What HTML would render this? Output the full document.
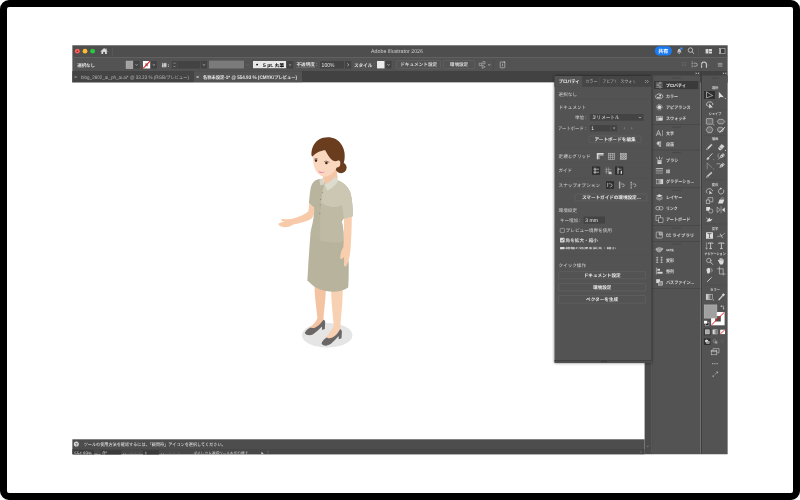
<!DOCTYPE html>
<html lang="ja">
<head>
<meta charset="utf-8">
<title>Adobe Illustrator 2026</title>
<style>
html,body{margin:0;padding:0}
body{width:800px;height:500px;background:#fff;position:relative;overflow:hidden;font-family:"Liberation Sans",sans-serif}
.frame{position:absolute;left:0;top:0;width:800px;height:500px;box-sizing:border-box;border:7px solid #000;border-radius:9px;pointer-events:none}
.win{position:absolute;left:0;top:0;width:800px;height:500px;clip-path:inset(45.2px 72.2px 45.5px 72.2px)}
.layer{position:absolute;left:0;top:0;width:800px;height:500px;overflow:hidden}
.jt{overflow:visible;font-family:"Liberation Sans","Noto Sans CJK JP",sans-serif;text-rendering:geometricPrecision;filter:grayscale(1)}

</style>
</head>
<body>
<div class="frame"></div>
<main class="win">
<header class="titlebar"><svg class="layer" width="800" height="500" viewBox="0 0 800 500"><rect class="titlebar" x="72.2" y="45.2" width="655.6" height="12.3" fill="#4e4e4e"/><rect x="72.2" y="57.1" width="655.6" height="0.6" fill="#464646"/><rect x="72.2" y="45.2" width="655.6" height="0.5" fill="#606060"/><g class="ic "><circle cx="77.35" cy="51.2" r="2.4" fill="#fe5f57"/><circle cx="85" cy="51.2" r="2.4" fill="#febc2e"/><circle cx="92.65" cy="51.2" r="2.4" fill="#28c840"/><circle cx="77.35" cy="51.2" r="0.75" fill="#8c1810"/><path d="M100.4 51.4L104.1 48L105.6 49.4V48.6H106.6V50.3L107.8 51.4H106.8V54H105V52H103.2V54H101.4V51.4Z" fill="#d8d8d8"/><rect x="112.1" y="47" width="0.5" height="9" fill="#5f5f5f"/><rect x="654.8" y="46.25" width="17.1" height="9.3" rx="4.65" fill="#1a7af0"/><path d="M676.9 52.6C677.8 51.8 677.6 50 678.2 49.2C678.7 48.5 679.9 48.5 680.4 49.2C681 50 680.8 51.8 681.7 52.6Z M678.6 53.1h1.4v0.6h-1.4z" fill="#c0c0c0"/><circle cx="681.4" cy="48.5" r="1.25" fill="#2d8cf0"/><circle cx="690.4" cy="50.1" r="2.25" fill="none" stroke="#d4d4d4" stroke-width="0.75"/><path d="M692.1 51.8L694.1 53.7" stroke="#d4d4d4" stroke-width="0.9"/><rect x="698.3" y="47" width="0.5" height="9" fill="#5f5f5f"/><path d="M705.6 49h2.9v4.4h-2.9z M709 49h3v1.9h-3z M709 51.4h3v2h-3z" fill="#d4d4d4"/><rect x="719.3" y="48.4" width="5.7" height="5.3" fill="#3c3c3c" stroke="#c4c4c4" stroke-width="0.6"/><rect x="719.6" y="48.7" width="1.4" height="4.7" fill="#b0b0b0"/></g><svg class="jt apptitle" role="img" aria-label="Adobe Illustrator 2026" x="371" y="48.65" width="52" height="5.5" fill="#cdcdcd" viewBox="0 -88 978.42 100" preserveAspectRatio="none"><text x="0" y="0" font-size="100">Adobe&#160;Illustrator&#160;2026</text></svg><svg class="jt " role="img" aria-label="共有" x="658.2" y="48.35" width="10.2" height="5.1" fill="#ffffff" viewBox="0 -88 200 100" preserveAspectRatio="none"><title>共有</title><text x="0" y="0" font-size="100" font-weight="bold">共有</text></svg></svg></header>
<nav class="controlbar"><svg class="layer" width="800" height="500" viewBox="0 0 800 500"><rect class="controlbar" x="72.2" y="57.6" width="655.6" height="13.4" fill="#535353"/><rect x="74.6" y="59.6" width="0.5" height="9.8" fill="#646464"/><svg class="jt " role="img" aria-label="選択なし" x="77.2" y="62.5" width="17.8" height="4.6" fill="#e0e0e0" viewBox="0 -88 400 100" preserveAspectRatio="none"><title>選択なし</title><text x="0" y="0" font-size="100" font-weight="bold">選択なし</text></svg><g class="ic "><rect x="126.1" y="61.1" width="6.7" height="7.4" fill="#a2a2a2" stroke="#c0c0c0" stroke-width="0.55"/><rect x="133.6" y="61" width="6" height="7.5" fill="#434343"/><path d="M135.4 64.35L136.6 65.35L137.8 64.35" fill="none" stroke="#d0d0d0" stroke-width="0.65"/><rect x="143" y="61" width="7.2" height="7.5" fill="#fff"/><rect x="145.3" y="63.3" width="2.6" height="2.9" fill="#8a8a8a"/><path d="M143.2 68.3L150 61.2" stroke="#f01c1c" stroke-width="1.05"/><rect x="150.8" y="61" width="6" height="7.5" fill="#434343"/><path d="M152.6 64.35L153.8 65.35L155 64.35" fill="none" stroke="#d0d0d0" stroke-width="0.65"/><rect x="171.8" y="61" width="5.4" height="7.5" fill="#434343"/><path d="M173.5 63.7L174.5 62.7L175.5 63.7" fill="none" stroke="#cfcfcf" stroke-width="0.55"/><path d="M173.5 65.9L174.5 66.9L175.5 65.9" fill="none" stroke="#cfcfcf" stroke-width="0.55"/><rect x="177.8" y="61" width="22.4" height="7.5" fill="#434343"/><rect x="200.9" y="61" width="6.1" height="7.5" fill="#434343"/><path d="M202.75 64.35L203.95 65.35L205.15 64.35" fill="none" stroke="#d0d0d0" stroke-width="0.65"/><rect x="209" y="60.6" width="35" height="7.9" fill="#7b7b7b"/><path d="M246.3 64.3L247.5 65.3L248.7 64.3" fill="none" stroke="#6e6e6e" stroke-width="0.65"/><rect x="253" y="61" width="33" height="7.2" fill="#e9e9e9"/><circle cx="257.1" cy="64.6" r="0.95" fill="#111"/><rect x="287" y="61" width="6.2" height="7.5" fill="#434343"/><path d="M288.9 64.35L290.1 65.35L291.3 64.35" fill="none" stroke="#d0d0d0" stroke-width="0.65"/><path d="M296.5 67.6H315" stroke="#bdbdbd" stroke-width="0.4" stroke-dasharray="0.6 0.5"/><rect x="320" y="61" width="24" height="7.5" fill="#434343"/><rect x="344.9" y="61" width="6.3" height="7.5" fill="#434343"/><path d="M347.3 63.4L349 64.75L347.3 66.1" fill="none" stroke="#d0d0d0" stroke-width="0.6"/><rect x="377" y="61" width="7.5" height="7.4" fill="#ebebeb"/><rect x="385.4" y="61" width="6.2" height="7.5" fill="#434343"/><path d="M387.3 64.35L388.5 65.35L389.7 64.35" fill="none" stroke="#d0d0d0" stroke-width="0.65"/><path d="M479.2 63.2h2.4v2.4h-2.4z M482.8 61.6h2.2v2.2h-2.2z M482.2 65.2L485.2 66.9L482.2 68.4Z" fill="none" stroke="#cfcfcf" stroke-width="0.5"/><path d="M488.1 64.3L489.3 65.3L490.5 64.3" fill="none" stroke="#d8d8d8" stroke-width="0.65"/><rect x="493.4" y="59.5" width="0.5" height="10" fill="#494949"/><rect x="500.2" y="62" width="4.6" height="5.8" rx="0.6" fill="none" stroke="#d0d0d0" stroke-width="0.6"/><path d="M502.5 63.6V66.2" stroke="#d0d0d0" stroke-width="0.6"/><path d="M504.4 61.2V63 M503.5 62.1H505.3" stroke="#d0d0d0" stroke-width="0.45"/><rect x="682" y="62.2" width="0.8" height="0.8" fill="#6f6f6f"/><rect x="682" y="63.7" width="0.8" height="0.8" fill="#6f6f6f"/><rect x="682" y="65.2" width="0.8" height="0.8" fill="#6f6f6f"/><rect x="683.5" y="62.2" width="0.8" height="0.8" fill="#6f6f6f"/><rect x="683.5" y="63.7" width="0.8" height="0.8" fill="#6f6f6f"/><rect x="683.5" y="65.2" width="0.8" height="0.8" fill="#6f6f6f"/><rect x="685" y="62.2" width="0.8" height="0.8" fill="#6f6f6f"/><rect x="685" y="63.7" width="0.8" height="0.8" fill="#6f6f6f"/><rect x="685" y="65.2" width="0.8" height="0.8" fill="#6f6f6f"/><path d="M692.2 61.4V68" stroke="#d4d4d4" stroke-width="0.7" stroke-dasharray="1 0.6"/><path d="M693.6 63.2h2.2a1.5 1.5 0 0 1 0 3h-2.2" fill="none" stroke="#d4d4d4" stroke-width="0.6"/><path d="M701.6 67.8V64.3a2.4 2.4 0 0 1 4.8 0V67.8" fill="none" stroke="#d4d4d4" stroke-width="1.05" stroke-dasharray="2.6 0.5 20"/><path d="M707.6 65.8L708.8 64.8" stroke="#a0a0a0" stroke-width="0.4"/><path d="M717.8 63.4h4.6M717.8 64.8h4.6M717.8 66.2h4.6" stroke="#b8b8b8" stroke-width="0.7"/></g><svg class="jt " role="img" aria-label="線" x="161.8" y="62.3" width="5" height="5" fill="#e0e0e0" viewBox="0 -88 100 100" preserveAspectRatio="none"><title>線</title><text x="0" y="0" font-size="100" font-weight="bold">線</text></svg><svg class="jt " role="img" aria-label=":" x="167.6" y="62.2" width="1.67" height="5" fill="#e0e0e0" viewBox="0 -88 33.3 100" preserveAspectRatio="none"><text x="0" y="0" font-size="100" font-weight="bold">:</text></svg><svg class="jt " role="img" aria-label="5 pt. 丸筆" x="263" y="62.3" width="21.2" height="4.8" fill="#111111" viewBox="0 -88 452.02 100" preserveAspectRatio="none"><title>5 pt. 丸筆</title><text x="0" y="0" font-size="108" font-weight="bold">5&#160;pt.&#160;</text><text x="252.02" y="0" font-size="100" font-weight="bold">丸筆</text></svg><svg class="jt " role="img" aria-label="不透明度" x="296.5" y="62.3" width="18.5" height="4.6" fill="#e0e0e0" viewBox="0 -88 400 100" preserveAspectRatio="none"><title>不透明度</title><text x="0" y="0" font-size="100" font-weight="bold">不透明度</text></svg><svg class="jt " role="img" aria-label=":" x="316" y="62.4" width="1.28" height="4.6" fill="#d6d6d6" viewBox="0 -88 27.78 100" preserveAspectRatio="none"><text x="0" y="0" font-size="100">:</text></svg><svg class="jt " role="img" aria-label="100%" x="321.6" y="62.15" width="12.8" height="5.7" fill="#e6e6e6" viewBox="0 -88 255.76 100" preserveAspectRatio="none"><text x="0" y="0" font-size="100">100%</text></svg><svg class="jt " role="img" aria-label="スタイル" x="354" y="62.5" width="18.2" height="4.6" fill="#e0e0e0" viewBox="0 -88 400 100" preserveAspectRatio="none"><title>スタイル</title><text x="0" y="0" font-size="100" font-weight="bold">スタイル</text></svg><svg class="jt " role="img" aria-label=":" x="373.6" y="62.4" width="1.28" height="4.6" fill="#9c9c9c" viewBox="0 -88 27.78 100" preserveAspectRatio="none"><text x="0" y="0" font-size="100">:</text></svg><rect class="btn" x="396.5" y="60.6" width="44" height="8" rx="0.9" fill="none" stroke="#686868" stroke-width="0.5"/><svg class="jt " role="img" aria-label="ドキュメント設定" x="400.2" y="62.4" width="37" height="4.6" fill="#d6d6d6" viewBox="0 -88 800 100" preserveAspectRatio="none"><title>ドキュメント設定</title><text x="0" y="0" font-size="100" font-weight="bold">ドキュメント設定</text></svg><rect class="btn" x="443.5" y="60.6" width="31" height="8" rx="0.9" fill="none" stroke="#686868" stroke-width="0.5"/><svg class="jt " role="img" aria-label="環境設定" x="449.8" y="62.4" width="18.4" height="4.6" fill="#d6d6d6" viewBox="0 -88 400 100" preserveAspectRatio="none"><title>環境設定</title><text x="0" y="0" font-size="100" font-weight="bold">環境設定</text></svg></svg></nav>
<div class="tabs"><svg class="layer" width="800" height="500" viewBox="0 0 800 500"><rect class="tabbar" x="72.2" y="71" width="655.6" height="11.6" fill="#424242"/><rect class="tab" x="72.2" y="71.2" width="121.3" height="11.4" fill="#444444"/><rect class="tab active" x="194" y="71.2" width="108" height="11.4" fill="#535353"/><g class="ic "><path d="M74.9 76.3L76.3 77.7M76.3 76.3L74.9 77.7" stroke="#9c9c9c" stroke-width="0.75" stroke-linecap="square"/><path d="M196.9 76.3L198.3 77.7M198.3 76.3L196.9 77.7" stroke="#dcdcdc" stroke-width="0.75" stroke-linecap="square"/><path d="M695.6999999999999 72.2L697.1999999999999 73.3L695.6999999999999 74.4ZM699.1 72.2L697.6 73.3L699.1 74.4Z" fill="#b8b8b8"/><path d="M722.9 72.2L724.4 73.3L722.9 74.4ZM726.3000000000001 72.2L724.8000000000001 73.3L726.3000000000001 74.4Z" fill="#b8b8b8"/></g><svg class="jt tab1" role="img" aria-label="blog_2602_ai_ph_ai.ai* @ 33.33 % (RGB/プレビュー)" x="81" y="74.7" width="108" height="4.6" fill="#b4b4b4" viewBox="0 -88 2560.96 100" preserveAspectRatio="none"><title>blog_2602_ai_ph_ai.ai* @ 33.33 % (RGB/プレビュー)</title><text x="0" y="0" font-size="108">blog_2602_ai_ph_ai.ai*&#160;@&#160;33.33&#160;%&#160;(RGB/</text><text x="2025" y="0" font-size="100">プレビュー</text><text x="2525" y="0" font-size="108">)</text></svg><svg class="jt tab2" role="img" aria-label="名称未設定-1* @ 554.93 % (CMYK/プレビュー)" x="203" y="74.7" width="94" height="4.6" fill="#e6e6e6" viewBox="0 -88 2209.67 100" preserveAspectRatio="none"><title>名称未設定-1* @ 554.93 % (CMYK/プレビュー)</title><text x="0" y="0" font-size="100" font-weight="bold">名称未設定</text><text x="500" y="0" font-size="108" font-weight="bold">-1*&#160;@&#160;554.93&#160;%&#160;(CMYK/</text><text x="1673.71" y="0" font-size="100" font-weight="bold">プレビュー</text><text x="2173.71" y="0" font-size="108" font-weight="bold">)</text></svg></svg></div>
<section class="canvaswrap"><svg class="layer" width="800" height="500" viewBox="0 0 800 500"><rect class="canvas" x="72.2" y="82.6" width="572.4" height="356.7" fill="#ffffff"/><rect class="vscroll" x="644.6" y="82.6" width="6.8" height="371.9" fill="#4b4b4b"/><svg class="person" role="img" aria-label="isometric woman illustration" x="270" y="130" width="100" height="225" viewBox="270 130 100 225"><title>isometric woman illustration</title>
<!-- ground shadow -->
<ellipse cx="327.2" cy="335.2" rx="25.2" ry="12.3" fill="#e5e5e5"/>
<!-- legs -->
<path d="M314.6 284C314.4 296 316.4 308 317.4 317.4C317 321 313 324.6 309 328.4L313.4 331.8C317.6 328.4 322.4 324.6 323.4 320.6C323.8 311 326 298 325.8 286Z" fill="#f4c3a2"/>
<path d="M331.2 288C331 300 333 316 333.8 325.6C333 329.4 328.6 334 325 338.6L329.6 341.6C334 337 339.2 332.4 340.4 328.6C340.6 318 343 302 342.6 288Z" fill="#f8d0b2"/>
<!-- shoes -->
<path d="M304.8 333C305.4 330.6 308 328.6 310.6 327.4C312.4 329 316 327.8 319 325C321.2 323 322.6 321 323.4 319.8C324.6 320 325.3 321.2 325.2 322.6L324.8 329L322 330L322 326.6C319.6 329 315.6 333 312.8 334.4C310 335.8 306 335.4 304.8 333Z" fill="#6b6766"/>
<path d="M321.6 343.6C322 341 324.6 338.6 327 337.4C329 339.2 332.6 338 335.6 335.2C337.8 333.2 339.2 330.8 340 329.2C341.4 329.4 342 330.8 341.9 332.2L341.5 338.2L338.7 339.2L338.7 336C336.2 338.6 332.4 343 329.6 344.6C326.8 346.2 322.6 346 321.6 343.6Z" fill="#6b6766"/>
<!-- skirt -->
<path d="M310.6 233C309.4 246 308.2 266 307.4 280.2C312 286 320 290.6 329.4 291.6C337 292.2 344 290.4 348.2 287.4C348.8 278 348.8 268 348.6 262C347.2 255 345.4 247 344 241Z" fill="#b8b39c"/>
<!-- right arm (hanging) -->
<path d="M344.2 215L351.8 215C351.8 228 351.2 240 350.4 250C350 256 348.6 262 346 266.2C344.8 267 343.8 266 344 264.4C344.2 261.4 344.4 258.6 343.6 257C342.8 258.4 341.6 259.2 340.4 258.8C339.8 256 341.2 250.4 343.4 247C344 238 343.8 226 344.2 215Z" fill="#f8ceae"/>
<!-- left arm (extended) -->
<path d="M309.4 203.6C309 207 308.8 210 308.2 211.4C305 214.2 299 216.8 294 218.2C291 219.2 288 219.6 285.6 219.2C283.6 218.8 281.8 218.8 281 219.6C280.8 220.6 281.8 221.2 284.6 221.8C282 222.2 279.6 222.8 278 224C278.6 225.6 281 226.8 284.4 227.3C287.6 227.6 291 226.4 293.2 224.6C298 223.6 305 222 310 219.6C313 218 314.6 214 315 208Z" fill="#f7caa9"/>
<!-- shirt: base (darker side) -->
<path d="M320 179C316.6 179.4 313.4 181 311.8 184.4C310.6 187.4 310.2 191 309.8 194C309.4 198 309 201 309 203.2L314.2 207.6C314.4 212 313.8 218 312.4 224C311.4 228 310.8 231 310.4 233.4C313 236 317 239 320.4 240.6C326 242.4 334 243 338.4 242.6C340.4 242.4 342.4 241.8 343.6 241C343.8 234 343.2 226 341.6 221.6L343.6 218.6L352.7 216.2C352.9 208 352.2 198 350 191.6C348.2 186.8 343.6 182.6 338 180.4L327 184Z" fill="#b9b49e"/>
<!-- shirt: lighter chest / right sleeve -->
<path d="M324.4 184L338 180.2C343.6 182.6 348.2 186.8 350 191.6C352.2 198 352.9 208 352.7 216.2L343.6 218.6C343.4 214 342.4 209 341.4 205.6C338.4 207.4 333.4 207.8 329 206.6C326 205.8 323.4 204.4 321.2 203C321.6 197 322.6 190 324.4 184Z" fill="#cbc7b2"/>
<!-- lower torso tone -->
<path d="M321.2 203C323.4 204.4 326 205.8 329 206.6C333.4 207.8 338.4 207.4 341.4 205.6C342.4 209 343.4 214 343.6 218.6L341.6 221.6C343.2 226 343.8 234 343.6 241C342.4 241.8 340.4 242.4 338.4 242.6C334 243 326 242.4 320.4 240.6C320 230 320 216 321.2 203Z" fill="#bfbaa4"/>
<!-- neck -->
<path d="M322.6 174L336.4 168L337.6 178.6L326 186L323.6 180Z" fill="#f3c5a5"/>
<!-- collar -->
<path d="M319.4 180.4L323.4 177.4C323.4 180 323.8 182.4 324.6 184.2L320.4 185.6Z" fill="#d6d4c4"/>
<path d="M324.6 184.2C328.6 182.6 333 179.6 335.4 176.4L338.4 180.4C336.4 184.4 331.6 188.6 327 190.6Z" fill="#dcdbcd"/>
<!-- buttons -->
<g fill="#8c8774"><circle cx="322.3" cy="192.5" r="0.6"/><circle cx="320.8" cy="199.4" r="0.6"/><circle cx="320.2" cy="205" r="0.6"/><circle cx="319.8" cy="213.4" r="0.65"/></g>
<!-- hair back + bun -->
<circle cx="341" cy="167.6" r="5.6" fill="#6a3d1f"/>
<!-- face -->
<path d="M312.8 155C312.8 160 313.4 165 315 169C316.8 172.6 319.6 175.4 322.8 176.4C325.6 177 329.4 175.8 332.4 173.2C334.6 171.2 336 169 336.8 167.4C339 167.6 340.8 165.6 340.6 163.2C340.4 161 339 160 337.6 160.6L336 150L320 148Z" fill="#fad8bf"/>
<!-- hair front -->
<path d="M311.4 154.4C311.4 148 314 142.6 319 139.4C323.6 136.6 330.6 136.4 335.6 139C340.6 141.8 344 147.4 344.6 153.6C345 158 344.4 162 343 165L339.6 166.4C340.4 165 340.8 163.6 340.4 162.2C340 160.8 338.8 160.2 337.4 160.8C336 161.6 334.2 161.4 332.4 160.2C329.6 158.2 327.4 154.2 325.2 150.2C321.6 150.2 316 152.4 312.6 156.4C311.8 156 311.4 155.4 311.4 154.4Z" fill="#6a3d1f"/>
<!-- eyes -->
<ellipse cx="316" cy="160.6" rx="1.15" ry="1.35" fill="#40241a"/>
<path d="M314.2 159.2C315.2 158.4 316.8 158.4 317.8 159" fill="none" stroke="#40241a" stroke-width="0.5"/>
<ellipse cx="326.4" cy="163" rx="1.3" ry="1.35" fill="#40241a"/>
<path d="M324.2 161.6C325.6 160.8 327.8 161.2 329.4 162.6" fill="none" stroke="#40241a" stroke-width="0.55"/>
<!-- mouth -->
<path d="M318.4 170.4C320.2 171.2 322.6 171.6 324.8 171.4C323.8 172.8 322 173.4 320.6 173C319.4 172.6 318.6 171.6 318.4 170.4Z" fill="#ee7fa8"/>
<path d="M319.2 170.9C320.6 171.4 322.4 171.6 324 171.5L323.4 172.1C322 172.2 320.6 172 319.6 171.5Z" fill="#ffffff"/>
</svg>
</svg></section>
<footer class="status"><svg class="layer" width="800" height="500" viewBox="0 0 800 500"><rect class="statusbar" x="72.2" y="439.3" width="572.4" height="15.2" fill="#4d4d4d"/><rect class="hscroll" x="72.2" y="449.4" width="572.4" height="5.1" fill="#484848"/><rect x="72.2" y="449" width="572.4" height="0.5" fill="#444444"/><g class="ic "><circle cx="76.3" cy="444" r="2.55" fill="#d6d6d6"/><rect x="73.4" y="450.2" width="20.6" height="6" fill="#3b3b3b"/><path d="M94.8 453.5L96 454.5L97.2 453.5" fill="none" stroke="#bdbdbd" stroke-width="0.65"/><rect x="100.6" y="450.2" width="20.6" height="6" fill="#3b3b3b"/><path d="M123.1 453.5L124.3 454.5L125.5 453.5" fill="none" stroke="#bdbdbd" stroke-width="0.65"/><path d="M131.6 452.4V455M135 452.4V455M139.6 452.4V455" stroke="#8a8a8a" stroke-width="0.4"/><rect x="143" y="450.2" width="16" height="6" fill="#3b3b3b"/><path d="M161.3 453.5L162.5 454.5L163.7 453.5" fill="none" stroke="#bdbdbd" stroke-width="0.65"/><path d="M170 452.4V455M174 452.4V455M179 452.4V455" stroke="#8a8a8a" stroke-width="0.4"/><path d="M261.4 451.8L263.6 453.4L261.4 455Z" fill="#cfcfcf"/><path d="M268 450V455" stroke="#8a8a8a" stroke-width="0.4"/><path d="M646.85 445.8L647.8 446.8L648.75 445.8" fill="none" stroke="#a8a8a8" stroke-width="0.5"/><path d="M640.4 451L641.4 451.9L640.4 452.8" fill="none" stroke="#a0a0a0" stroke-width="0.45"/></g><svg class="jt " role="img" aria-label="?" x="74.96" y="441.8" width="2.69" height="4.4" fill="#4a4a4a" viewBox="0 -88 61.08 100" preserveAspectRatio="none"><text x="0" y="0" font-size="100" font-weight="bold">?</text></svg><svg class="jt " role="img" aria-label="ツールの使用方法を確認するには、「疑問符」アイコンを選択してください。" x="83.7" y="441.85" width="144.5" height="4.5" fill="#e8e8e8" viewBox="0 -88 3500 100" preserveAspectRatio="none"><title>ツールの使用方法を確認するには、「疑問符」アイコンを選択してください。</title><text x="0" y="0" font-size="100">ツールの使用方法を確認するには、「疑問符」アイコンを選択してください。</text></svg><svg class="jt " role="img" aria-label="554.93%" x="74.3" y="451.15" width="17.6" height="4.9" fill="#dedede" viewBox="0 -88 394.78 100" preserveAspectRatio="none"><text x="0" y="0" font-size="100">554.93%</text></svg><svg class="jt " role="img" aria-label="0°" x="102.4" y="451.15" width="4.6" height="4.9" fill="#dedede" viewBox="0 -88 98.56 100" preserveAspectRatio="none"><title>0°</title><text x="0" y="0" font-size="108">0</text><text x="60.06" y="0" font-size="100">°</text></svg><svg class="jt " role="img" aria-label="1" x="144.6" y="451.15" width="2.73" height="4.9" fill="#dedede" viewBox="0 -88 55.62 100" preserveAspectRatio="none"><text x="0" y="0" font-size="100">1</text></svg><svg class="jt " role="img" aria-label="ダイレクト選択ツールを切り替え" x="193.4" y="451.5" width="55" height="4.4" fill="#d0d0d0" viewBox="0 -88 1500 100" preserveAspectRatio="none"><title>ダイレクト選択ツールを切り替え</title><text x="0" y="0" font-size="100">ダイレクト選択ツールを切り替え</text></svg></svg></footer>
<aside class="dockwrap"><svg class="layer" width="800" height="500" viewBox="0 0 800 500"><rect class="dock" x="651.4" y="75.5" width="49" height="379" fill="#535353"/><rect x="651.4" y="75.5" width="0.7" height="379" fill="#414141"/><rect x="700.4" y="71" width="1.6" height="383.5" fill="#3f3f3f"/><rect class="dockitem active" x="654" y="81" width="44.3" height="8.1" fill="#3a3a3a"/><rect class="sep" x="652.1" y="124.3" width="48.3" height="0.6" fill="#434343"/><rect class="sep" x="652.1" y="149.7" width="48.3" height="0.6" fill="#434343"/><rect class="sep" x="652.1" y="187.5" width="48.3" height="0.6" fill="#434343"/><rect class="sep" x="652.1" y="225.1" width="48.3" height="0.6" fill="#434343"/><rect class="sep" x="652.1" y="241.1" width="48.3" height="0.6" fill="#434343"/><rect class="sep" x="652.1" y="288.3" width="48.3" height="0.6" fill="#434343"/><g class="ic "><rect x="672" y="77.5" width="0.55" height="1" fill="#404040"/><rect x="673" y="77.5" width="0.55" height="1" fill="#404040"/><rect x="674" y="77.5" width="0.55" height="1" fill="#404040"/><rect x="675" y="77.5" width="0.55" height="1" fill="#404040"/><rect x="676" y="77.5" width="0.55" height="1" fill="#404040"/><rect x="677" y="77.5" width="0.55" height="1" fill="#404040"/><rect x="678" y="77.5" width="0.55" height="1" fill="#404040"/><rect x="679" y="77.5" width="0.55" height="1" fill="#404040"/><rect x="680" y="77.5" width="0.55" height="1" fill="#404040"/><rect x="672" y="126.7" width="0.55" height="1" fill="#404040"/><rect x="673" y="126.7" width="0.55" height="1" fill="#404040"/><rect x="674" y="126.7" width="0.55" height="1" fill="#404040"/><rect x="675" y="126.7" width="0.55" height="1" fill="#404040"/><rect x="676" y="126.7" width="0.55" height="1" fill="#404040"/><rect x="677" y="126.7" width="0.55" height="1" fill="#404040"/><rect x="678" y="126.7" width="0.55" height="1" fill="#404040"/><rect x="679" y="126.7" width="0.55" height="1" fill="#404040"/><rect x="680" y="126.7" width="0.55" height="1" fill="#404040"/><rect x="672" y="152.1" width="0.55" height="1" fill="#404040"/><rect x="673" y="152.1" width="0.55" height="1" fill="#404040"/><rect x="674" y="152.1" width="0.55" height="1" fill="#404040"/><rect x="675" y="152.1" width="0.55" height="1" fill="#404040"/><rect x="676" y="152.1" width="0.55" height="1" fill="#404040"/><rect x="677" y="152.1" width="0.55" height="1" fill="#404040"/><rect x="678" y="152.1" width="0.55" height="1" fill="#404040"/><rect x="679" y="152.1" width="0.55" height="1" fill="#404040"/><rect x="680" y="152.1" width="0.55" height="1" fill="#404040"/><rect x="672" y="189.9" width="0.55" height="1" fill="#404040"/><rect x="673" y="189.9" width="0.55" height="1" fill="#404040"/><rect x="674" y="189.9" width="0.55" height="1" fill="#404040"/><rect x="675" y="189.9" width="0.55" height="1" fill="#404040"/><rect x="676" y="189.9" width="0.55" height="1" fill="#404040"/><rect x="677" y="189.9" width="0.55" height="1" fill="#404040"/><rect x="678" y="189.9" width="0.55" height="1" fill="#404040"/><rect x="679" y="189.9" width="0.55" height="1" fill="#404040"/><rect x="680" y="189.9" width="0.55" height="1" fill="#404040"/><rect x="672" y="227.5" width="0.55" height="1" fill="#404040"/><rect x="673" y="227.5" width="0.55" height="1" fill="#404040"/><rect x="674" y="227.5" width="0.55" height="1" fill="#404040"/><rect x="675" y="227.5" width="0.55" height="1" fill="#404040"/><rect x="676" y="227.5" width="0.55" height="1" fill="#404040"/><rect x="677" y="227.5" width="0.55" height="1" fill="#404040"/><rect x="678" y="227.5" width="0.55" height="1" fill="#404040"/><rect x="679" y="227.5" width="0.55" height="1" fill="#404040"/><rect x="680" y="227.5" width="0.55" height="1" fill="#404040"/><rect x="672" y="243.5" width="0.55" height="1" fill="#404040"/><rect x="673" y="243.5" width="0.55" height="1" fill="#404040"/><rect x="674" y="243.5" width="0.55" height="1" fill="#404040"/><rect x="675" y="243.5" width="0.55" height="1" fill="#404040"/><rect x="676" y="243.5" width="0.55" height="1" fill="#404040"/><rect x="677" y="243.5" width="0.55" height="1" fill="#404040"/><rect x="678" y="243.5" width="0.55" height="1" fill="#404040"/><rect x="679" y="243.5" width="0.55" height="1" fill="#404040"/><rect x="680" y="243.5" width="0.55" height="1" fill="#404040"/><path d="M655.8 83H662.6M655.8 85.1H662.6M655.8 87.2H662.6" fill="none" stroke="#d6d6d6" stroke-width="0.5"/><circle cx="660.2" cy="83" r="0.85" fill="#3a3a3a" stroke="#d6d6d6" stroke-width="0.5"/><circle cx="658" cy="85.1" r="0.85" fill="#3a3a3a" stroke="#d6d6d6" stroke-width="0.5"/><circle cx="660" cy="87.2" r="0.85" fill="#3a3a3a" stroke="#d6d6d6" stroke-width="0.5"/><path d="M655.6 96.8C655.6 95 657.4 93.9 659.4 93.9C661.4 93.9 662.9 94.9 662.9 96.2C662.9 97.9 661.2 98.8 659.2 98.8C657.2 98.8 655.6 98.2 655.6 96.8Z" fill="none" stroke="#d6d6d6" stroke-width="0.7"/><circle cx="660.2" cy="95.4" r="1" fill="#d6d6d6"/><path d="M657 97.4H660.6" stroke="#d6d6d6" stroke-width="0.9"/><circle cx="659.4" cy="107.2" r="1.9" fill="#d6d6d6"/><circle cx="659.4" cy="107.2" r="2.8" fill="none" stroke="#d6d6d6" stroke-width="0.8" stroke-dasharray="0.8 0.666"/><rect x="656.3" y="116.2" width="6.2" height="4.1" fill="none" stroke="#d6d6d6" stroke-width="0.5"/><path d="M658.3 116.2V120.3M660.4 116.2V120.3" fill="none" stroke="#d6d6d6" stroke-width="0.4"/><rect x="658.3" y="117.6" width="4.2" height="2.7" fill="#d6d6d6"/><rect x="656.3" y="117.6" width="2" height="2.7" fill="#9a9a9a"/><path d="M656.2 135.9L658.5 130.4L660.8 135.9M657.1 134H659.9" fill="none" stroke="#d6d6d6" stroke-width="0.7"/><path d="M662.5 130V136.2" fill="none" stroke="#d6d6d6" stroke-width="0.45"/><path d="M661.2 141.8H658.6A1.6 1.6 0 0 0 658.6 145H659.4V147M660.6 141.8V147" fill="none" stroke="#d6d6d6" stroke-width="0.65"/><path d="M657.1 143.4A1.5 1.5 0 0 1 659.6 142.2V144.8H658.4Z" fill="#d6d6d6"/><path d="M657.4 160.2H661.6V164H657.4Z" fill="#d6d6d6"/><path d="M656.4 157.4L657.8 159.6M659.5 156.4V159.2M662.4 157.4L661.2 159.6" fill="none" stroke="#d6d6d6" stroke-width="0.65"/><path d="M657.4 161.9H661.6" stroke="#535353" stroke-width="0.4"/><path d="M655.8 168.7H663" fill="none" stroke="#d6d6d6" stroke-width="0.9"/><path d="M655.8 170.9H663" fill="none" stroke="#d6d6d6" stroke-width="0.7"/><path d="M655.8 173.1H663" fill="none" stroke="#d6d6d6" stroke-width="0.5"/><defs><linearGradient id="gr1" x1="0" x2="1"><stop offset="0" stop-color="#454545"/><stop offset="1" stop-color="#ececec"/></linearGradient></defs><rect x="656.4" y="179.3" width="6.5" height="4.6" fill="url(#gr1)" stroke="#d6d6d6" stroke-width="0.45"/><path d="M659.4 194.2L662.6 195.7L659.4 197.2L656.2 195.7Z" fill="#d6d6d6"/><path d="M656.2 197.2L659.4 198.7L662.6 197.2M656.2 198.6L659.4 200.1L662.6 198.6" fill="none" stroke="#d6d6d6" stroke-width="0.6"/><rect x="655.8" y="206.5" width="4" height="3.4" rx="1.7" fill="none" stroke="#d6d6d6" stroke-width="0.6"/><rect x="659" y="206.5" width="4" height="3.4" rx="1.7" fill="none" stroke="#d6d6d6" stroke-width="0.6"/><rect x="656" y="215.3" width="4.4" height="5" fill="none" stroke="#d6d6d6" stroke-width="0.55"/><rect x="658.6" y="217.9" width="4.4" height="4.4" fill="#4a4a4a" stroke="#d6d6d6" stroke-width="0.55"/><rect x="656.2" y="232" width="6.2" height="6" rx="0.8" fill="none" stroke="#d6d6d6" stroke-width="0.6"/><path d="M659.2 232V235H662.4" fill="none" stroke="#d6d6d6" stroke-width="0.6"/><rect x="659.2" y="232.2" width="3" height="2.8" fill="#d6d6d6" opacity="0.5"/><path d="M655.8 248.9C657.4 247.6 660.4 247.2 663 248.7L660.8 251.5C659.6 252.3 658 252.1 657 251Z" fill="#8a8a8a" stroke="#d6d6d6" stroke-width="0.55"/><path d="M656.6 249.2C658.6 250.2 660.6 250.2 662.2 249.4" fill="none" stroke="#d6d6d6" stroke-width="0.5"/><path d="M657.2 256.8V263M661.6 256.8V263" fill="none" stroke="#d6d6d6" stroke-width="0.55"/><path d="M656 257.4H658.4M656 262.4H658.4M660.4 257.4H662.8M660.4 262.4H662.8M656 259.9H658.4M660.4 259.9H662.8" fill="none" stroke="#d6d6d6" stroke-width="0.5"/><path d="M656.4 267.6V274.4" fill="none" stroke="#d6d6d6" stroke-width="0.6"/><rect x="657.4" y="268.8" width="2.6" height="1.9" fill="#d6d6d6"/><rect x="657.4" y="271.8" width="5.2" height="1.9" fill="#d6d6d6"/><rect x="656.2" y="279.2" width="3.8" height="3.8" fill="#d6d6d6"/><rect x="658.7" y="281.3" width="3.9" height="3.9" fill="#8d8d8d" stroke="#d6d6d6" stroke-width="0.5"/></g><svg class="jt " role="img" aria-label="プロパティ" x="666" y="82.8" width="20.2" height="4.4" fill="#f2f2f2" viewBox="0 -88 500 100" preserveAspectRatio="none"><title>プロパティ</title><text x="0" y="0" font-size="100" font-weight="bold">プロパティ</text></svg><svg class="jt " role="img" aria-label="カラー" x="666" y="94" width="12" height="4.4" fill="#d6d6d6" viewBox="0 -88 300 100" preserveAspectRatio="none"><title>カラー</title><text x="0" y="0" font-size="100" font-weight="bold">カラー</text></svg><svg class="jt " role="img" aria-label="アピアランス" x="666" y="104.8" width="24.6" height="4.4" fill="#d6d6d6" viewBox="0 -88 600 100" preserveAspectRatio="none"><title>アピアランス</title><text x="0" y="0" font-size="100" font-weight="bold">アピアランス</text></svg><svg class="jt " role="img" aria-label="スウォッチ" x="666" y="115.8" width="20.4" height="4.4" fill="#d6d6d6" viewBox="0 -88 500 100" preserveAspectRatio="none"><title>スウォッチ</title><text x="0" y="0" font-size="100" font-weight="bold">スウォッチ</text></svg><svg class="jt " role="img" aria-label="文字" x="666" y="130.8" width="8" height="4.4" fill="#d6d6d6" viewBox="0 -88 200 100" preserveAspectRatio="none"><title>文字</title><text x="0" y="0" font-size="100" font-weight="bold">文字</text></svg><svg class="jt " role="img" aria-label="段落" x="666" y="141.8" width="8" height="4.4" fill="#d6d6d6" viewBox="0 -88 200 100" preserveAspectRatio="none"><title>段落</title><text x="0" y="0" font-size="100" font-weight="bold">段落</text></svg><svg class="jt " role="img" aria-label="ブラシ" x="666" y="157.7" width="12.4" height="4.4" fill="#d6d6d6" viewBox="0 -88 300 100" preserveAspectRatio="none"><title>ブラシ</title><text x="0" y="0" font-size="100" font-weight="bold">ブラシ</text></svg><svg class="jt " role="img" aria-label="線" x="666" y="168.8" width="4.2" height="4.4" fill="#d6d6d6" viewBox="0 -88 100 100" preserveAspectRatio="none"><title>線</title><text x="0" y="0" font-size="100" font-weight="bold">線</text></svg><svg class="jt dl" role="img" aria-label="グラデーショ..." x="666" y="179.6" width="28.2" height="4.4" fill="#d6d6d6" viewBox="0 -88 690.02 100" preserveAspectRatio="none"><title>グラデーショ...</title><text x="0" y="0" font-size="100" font-weight="bold">グラデーショ</text><text x="600" y="0" font-size="108" font-weight="bold">...</text></svg><svg class="jt " role="img" aria-label="レイヤー" x="666" y="194.8" width="16.4" height="4.4" fill="#d6d6d6" viewBox="0 -88 400 100" preserveAspectRatio="none"><title>レイヤー</title><text x="0" y="0" font-size="100" font-weight="bold">レイヤー</text></svg><svg class="jt " role="img" aria-label="リンク" x="666" y="206" width="11.6" height="4.4" fill="#d6d6d6" viewBox="0 -88 300 100" preserveAspectRatio="none"><title>リンク</title><text x="0" y="0" font-size="100" font-weight="bold">リンク</text></svg><svg class="jt " role="img" aria-label="アートボード" x="666" y="216.8" width="24.6" height="4.4" fill="#d6d6d6" viewBox="0 -88 600 100" preserveAspectRatio="none"><title>アートボード</title><text x="0" y="0" font-size="100" font-weight="bold">アートボード</text></svg><svg class="jt " role="img" aria-label="CC" x="666" y="232.6" width="5.2" height="4.9" fill="#d6d6d6" viewBox="0 -88 144.43 100" preserveAspectRatio="none"><text x="0" y="0" font-size="100" font-weight="bold">CC</text></svg><svg class="jt " role="img" aria-label="ライブラリ" x="672.2" y="232.8" width="22" height="4.4" fill="#d6d6d6" viewBox="0 -88 500 100" preserveAspectRatio="none"><title>ライブラリ</title><text x="0" y="0" font-size="100" font-weight="bold">ライブラリ</text></svg><svg class="jt " role="img" aria-label="属性" x="666" y="248.5" width="8" height="2.6" fill="#d6d6d6" viewBox="0 -88 200 100" preserveAspectRatio="none"><title>属性</title><text x="0" y="0" font-size="100" font-weight="bold">属性</text></svg><svg class="jt " role="img" aria-label="変形" x="666" y="257.7" width="8.2" height="4.4" fill="#d6d6d6" viewBox="0 -88 200 100" preserveAspectRatio="none"><title>変形</title><text x="0" y="0" font-size="100" font-weight="bold">変形</text></svg><svg class="jt " role="img" aria-label="整列" x="666" y="268.8" width="8.2" height="4.4" fill="#d6d6d6" viewBox="0 -88 200 100" preserveAspectRatio="none"><title>整列</title><text x="0" y="0" font-size="100" font-weight="bold">整列</text></svg><svg class="jt dl" role="img" aria-label="パスファイン..." x="666" y="279.8" width="28.2" height="4.4" fill="#d6d6d6" viewBox="0 -88 690.02 100" preserveAspectRatio="none"><title>パスファイン...</title><text x="0" y="0" font-size="100" font-weight="bold">パスファイン</text><text x="600" y="0" font-size="108" font-weight="bold">...</text></svg></svg></aside>
<aside class="tools"><svg class="layer" width="800" height="500" viewBox="0 0 800 500"><rect class="toolbar" x="702" y="75.5" width="25.8" height="379" fill="#535353"/><g class="ic "><rect x="712" y="77.5" width="0.55" height="1" fill="#404040"/><rect x="713" y="77.5" width="0.55" height="1" fill="#404040"/><rect x="714" y="77.5" width="0.55" height="1" fill="#404040"/><rect x="715" y="77.5" width="0.55" height="1" fill="#404040"/><rect x="716" y="77.5" width="0.55" height="1" fill="#404040"/><rect x="717" y="77.5" width="0.55" height="1" fill="#404040"/><rect x="718" y="77.5" width="0.55" height="1" fill="#404040"/><rect x="704" y="91" width="11" height="7.9" fill="#2f2f2f"/><path d="M706.5 92.2V97.9L712.3 95.7Z" fill="none" stroke="#dcdcdc" stroke-width="0.6" stroke-linejoin="round" stroke-linecap="round"/><path d="M718.8 91.8V98.4L720.5 96.9L723.9 97.3Z" fill="#dcdcdc"/><rect x="724.85" y="98.15" width="0.9" height="0.9" fill="#dcdcdc"/><path d="M706.6 105C706 103 708 101.7 710 101.9C712.2 102.1 713.3 103.4 712.8 104.8" fill="none" stroke="#dcdcdc" stroke-width="0.7" stroke-linejoin="round" stroke-linecap="round"/><path d="M709.2 103.6V108.4L710.5 107.4L712.8 107.6Z" fill="#dcdcdc"/><path d="M706.6 105C707 106 707.8 106.3 708.8 106.2" fill="none" stroke="#dcdcdc" stroke-width="0.6" stroke-linejoin="round" stroke-linecap="round"/><rect x="706.4" y="118.6" width="6.4" height="5.6" rx="0.5" fill="#6a6a6a" stroke="#dcdcdc" stroke-width="0.55"/><rect x="713.45" y="124.45" width="0.9" height="0.9" fill="#dcdcdc"/><path d="M717.2 121.6L718.8 119.4H723L724.8 121.6L723 123.8H718.8Z" fill="#6a6a6a" stroke="#dcdcdc" stroke-width="0.55"/><path d="M706.2 129.8L707.9 126.9H711.3L713 129.8L711.3 132.7H707.9Z" fill="#6a6a6a" stroke="#dcdcdc" stroke-width="0.55"/><ellipse cx="720.4" cy="129.6" rx="3" ry="2.4" fill="#6a6a6a" stroke="#dcdcdc" stroke-width="0.55"/><path d="M719.8 132.2L724.8 127.4" stroke="#dcdcdc" stroke-width="1.0" stroke-linecap="round"/><path d="M707.7 148.6L711.9 144.4" stroke="#cfcfcf" stroke-width="1.7" stroke-linecap="butt"/><path d="M706.2 150L706.7 148.2L708 149.5Z" fill="#cfcfcf"/><path d="M710.6 144.4L712 145.8" stroke="#535353" stroke-width="0.35"/><path d="M718 148.2L721.6 144L724.6 146.2L721.2 150.2H719.4Z" fill="#cfcfcf"/><path d="M719 147.2L722 149.4" stroke="#535353" stroke-width="0.5"/><rect x="725.05" y="150.05" width="0.9" height="0.9" fill="#dcdcdc"/><path d="M709.2 156.8L712.4 153.4" stroke="#cfcfcf" stroke-width="1.0" stroke-linecap="butt"/><path d="M706.5 159.7C706.7 158.1 707.5 157.3 708.7 157.1L709.5 157.9C709.3 159 708.1 159.8 706.5 159.7Z" fill="#cfcfcf"/><rect x="713.2" y="159.2" width="0.9" height="0.9" fill="#9a9a9a"/><g transform="translate(721.7 156.3) rotate(45) scale(0.95)"><path d="M-1.5 -3.3H1.5V-2.5H-1.5Z" fill="#cfcfcf"/><path d="M-1.5 -2.1H1.5V0.3L0 3.4L-1.5 0.3Z" fill="#cfcfcf"/><path d="M0 0.8V3" stroke="#535353" stroke-width="0.45"/><circle cx="0" cy="0.2" r="0.5" fill="#535353"/></g><path d="M718.8 153.6C717.2 155.4 718 156.8 719 157.6C719.6 158.2 719.4 159.2 718.4 159.2" fill="none" stroke="#cfcfcf" stroke-width="0.5" stroke-linejoin="round" stroke-linecap="round"/><path d="M707.2 169V163L712 167.6" fill="none" stroke="#b8b8b8" stroke-width="0.5" stroke-linejoin="round" stroke-linecap="round"/><rect x="713.2" y="168.6" width="0.9" height="0.9" fill="#9a9a9a"/><g transform="translate(721.5 165.8) rotate(45) scale(0.95)"><path d="M-1.5 -3.3H1.5V-2.5H-1.5Z" fill="#cfcfcf"/><path d="M-1.5 -2.1H1.5V0.3L0 3.4L-1.5 0.3Z" fill="#cfcfcf"/><path d="M0 0.8V3" stroke="#535353" stroke-width="0.45"/><circle cx="0" cy="0.2" r="0.5" fill="#535353"/></g><path d="M717 163.8H719.8" fill="none" stroke="#cfcfcf" stroke-width="0.6" stroke-linejoin="round" stroke-linecap="round"/><path d="M707.5 176.4L711.8 172.4" stroke="#cfcfcf" stroke-width="1.6" stroke-linecap="butt"/><path d="M706.1 177.8L706.6 176.1L707.8 177.3Z" fill="#cfcfcf"/><path d="M708.4 174.6L709.6 175.8M709.8 173.4L711 174.6" stroke="#535353" stroke-width="0.4"/><path d="M707 193C705.6 191.6 706.2 189.4 708.4 188.8C710.4 188.3 712.4 189.2 712.6 190.8" fill="none" stroke="#dcdcdc" stroke-width="0.65" stroke-linejoin="round" stroke-linecap="round"/><path d="M709.4 190.4V194.6L710.6 193.6L712.6 193.8Z" fill="#dcdcdc"/><path d="M723.6 190A2.7 2.7 0 1 1 721 188.5" fill="none" stroke="#dcdcdc" stroke-width="0.65" stroke-linejoin="round" stroke-linecap="round"/><path d="M720.2 187.4L722 188.6L720.4 189.8Z" fill="#dcdcdc"/><rect x="708.4" y="197.6" width="4.4" height="4.2" fill="none" stroke="#dcdcdc" stroke-width="0.55" stroke-linejoin="round" stroke-linecap="round"/><rect x="706.2" y="200" width="3.6" height="3.4" fill="#535353" stroke="#dcdcdc" stroke-width="0.55"/><path d="M718 203.6L719.6 199.4H724.4L722.8 203.6Z" fill="#dcdcdc"/><path d="M720.6 198.8C721.4 197.8 722.6 197.6 723.6 198" fill="none" stroke="#dcdcdc" stroke-width="0.5" stroke-linejoin="round" stroke-linecap="round"/><rect x="706.2" y="207" width="3.8" height="3.8" fill="#dcdcdc"/><circle cx="710.8" cy="211" r="2.1" fill="#535353" stroke="#dcdcdc" stroke-width="0.55"/><path d="M717.4 207.4L720.2 209.8L717.4 212.2Z" fill="none" stroke="#dcdcdc" stroke-width="0.5" stroke-linejoin="round" stroke-linecap="round"/><path d="M724.8 207.4L722 209.8L724.8 212.2Z" fill="#dcdcdc"/><path d="M721.1 206.6V213" fill="none" stroke="#dcdcdc" stroke-width="0.45" stroke-linejoin="round" stroke-linecap="round"/><path d="M706.4 221.8L709.4 217.4L710.4 219.4L712.6 218.6L710.8 221.2Z" fill="#dcdcdc"/><path d="M706.4 218L708.4 219.8" fill="none" stroke="#dcdcdc" stroke-width="0.6" stroke-linejoin="round" stroke-linecap="round"/><rect x="706" y="232.2" width="7" height="6.6" rx="0.6" fill="#dcdcdc"/><path d="M707.8 234V233.6H711.2V234M709.5 233.6V237.6M708.8 237.6H710.2" fill="none" stroke="#4a4a4a" stroke-width="0.7"/><path d="M717.6 236.6C719.4 235.4 721.4 237.4 724.6 233.2" fill="none" stroke="#dcdcdc" stroke-width="0.55" stroke-linejoin="round" stroke-linecap="round"/><path d="M720.4 234L722.4 237.8" fill="none" stroke="#dcdcdc" stroke-width="0.7" stroke-linejoin="round" stroke-linecap="round"/><path d="M708.35 243.9V243H712.85V243.9M710.6 243V248.6M709.3 248.6H711.9" fill="none" stroke="#dcdcdc" stroke-width="0.8"/><path d="M706.6 242.6V249M705.8 248L706.6 249.2L707.4 248" fill="none" stroke="#dcdcdc" stroke-width="0.45" stroke-linejoin="round" stroke-linecap="round"/><path d="M718.77 243.9V243H724.02V243.9M721.4 243V248.6M720.1 248.6H722.7" fill="none" stroke="#dcdcdc" stroke-width="0.8"/><circle cx="708.8" cy="260.4" r="2.2" fill="none" stroke="#dcdcdc" stroke-width="0.6" stroke-linejoin="round" stroke-linecap="round"/><path d="M710.5 262.1L712.6 264.4" fill="none" stroke="#dcdcdc" stroke-width="0.8" stroke-linejoin="round" stroke-linecap="round"/><path d="M718.6 261.6L717.8 260.2L718.6 259.8L719.4 260.6V258.6H720.2V258H721V258.2H721.8V258.6H722.6V259.2H723.6V262.4L722.6 264.4H720Z" fill="#dcdcdc"/><path d="M720.2 258.6V260.6M721 258V260.6M721.8 258.4V260.6M722.6 259V260.6" stroke="#535353" stroke-width="0.25"/><path d="M706.6 270.6V268.8L707.4 268.4L708.4 267.8L709.4 268.2L710.2 268.6V271.8L709.2 273.4H707.4Z" fill="#dcdcdc"/><path d="M711 268.2C712.2 269 712.6 270.6 711.8 272" fill="none" stroke="#dcdcdc" stroke-width="0.5" stroke-linejoin="round" stroke-linecap="round"/><path d="M719.4 267V274H725M717.6 268.8H723.2V275" fill="none" stroke="#dcdcdc" stroke-width="0.6" stroke-linejoin="round" stroke-linecap="round"/><path d="M707.2 281.8L711.6 277.4" stroke="#cfcfcf" stroke-width="1.0" stroke-linecap="butt"/><path d="M708.2 279.4L709.4 280.6M709.6 278L710.8 279.2" stroke="#535353" stroke-width="0.35"/><defs><linearGradient id="gr2" x1="0" x2="1"><stop offset="0" stop-color="#e8e8e8"/><stop offset="1" stop-color="#3c3c3c"/></linearGradient><linearGradient id="gr3" x1="0" x2="1"><stop offset="0" stop-color="#f0f0f0"/><stop offset="1" stop-color="#5a5a5a"/></linearGradient></defs><rect x="706.2" y="294.2" width="6.2" height="5.4" fill="url(#gr2)" stroke="#dcdcdc" stroke-width="0.5"/><rect x="712.95" y="299.55" width="0.9" height="0.9" fill="#dcdcdc"/><path d="M718.9 299.7L722.4 295.9" stroke="#cfcfcf" stroke-width="1.3" stroke-linecap="butt"/><path d="M721.6 295L723.4 293.2L725 294.8L723.2 296.6Z" fill="#dcdcdc"/><path d="M718.4 300.4L718.8 299L719.7 299.9Z" fill="#dcdcdc"/><rect x="711.1" y="312" width="13.5" height="13.3" fill="#ffffff"/><rect x="715.2" y="316.1" width="5.6" height="5.4" fill="#4c4c4c"/><path d="M711.4 325L724.3 312.3" stroke="#f21c1c" stroke-width="1"/><rect x="704.2" y="304.9" width="12.7" height="13.2" fill="#a0a0a0" stroke="#c0c0c0" stroke-width="0.5"/><path d="M721.2 306.2H723.6V308.8" fill="none" stroke="#dcdcdc" stroke-width="0.55" stroke-linejoin="round" stroke-linecap="round"/><path d="M720.4 306.2L721.6 305.3V307.1Z M723.6 309.6L722.7 308.4H724.5Z" fill="#dcdcdc"/><rect x="705.6" y="322.2" width="3.3" height="3.2" fill="#1e1e1e" stroke="#dcdcdc" stroke-width="0.45"/><rect x="703.9" y="320.6" width="3.4" height="3.3" fill="#fff" stroke="#333" stroke-width="0.3"/><rect x="703.9" y="328.6" width="6.6" height="6.6" fill="#2f2f2f"/><rect x="705.2" y="329.8" width="4.2" height="4.2" fill="#a8a8a8" stroke="#e0e0e0" stroke-width="0.5"/><rect x="712.9" y="329.8" width="4.3" height="4.2" fill="url(#gr3)" stroke="#dcdcdc" stroke-width="0.45"/><rect x="720.2" y="329.7" width="4.8" height="4.4" fill="#fff"/><path d="M720.4 333.9L724.8 329.9" stroke="#f21c1c" stroke-width="0.9"/><rect x="703.9" y="338.4" width="6.6" height="6.6" fill="#2f2f2f"/><circle cx="706.6" cy="341" r="1.6" fill="#dcdcdc"/><rect x="706.6" y="341.2" width="2.8" height="2.6" fill="#8c8c8c" stroke="#dcdcdc" stroke-width="0.35"/><circle cx="714.6" cy="341" r="1.5" fill="none" stroke="#b4b4b4" stroke-width="0.4"/><rect x="714.8" y="341.2" width="2.6" height="2.4" fill="#9a9a9a"/><circle cx="722.4" cy="341.4" r="1.4" fill="none" stroke="#6c6c6c" stroke-width="0.4"/><rect x="713.4" y="348.6" width="5.6" height="4.2" fill="none" stroke="#dcdcdc" stroke-width="0.5" stroke-linejoin="round" stroke-linecap="round"/><rect x="711.2" y="350.6" width="5.6" height="4.2" fill="#535353" stroke="#dcdcdc" stroke-width="0.5"/><path d="M711.2 351.6H716.8" fill="none" stroke="#dcdcdc" stroke-width="0.5" stroke-linejoin="round" stroke-linecap="round"/><rect x="712.2" y="363.2" width="1" height="1" fill="#dadada"/><rect x="714.4" y="363.2" width="1" height="1" fill="#dadada"/><rect x="716.6" y="363.2" width="1" height="1" fill="#dadada"/><path d="M716.4 371.2L718.2 372L717.4 373.6Z M712.6 375.6h1.2v1.2h-1.2z" fill="#c8c8c8"/><path d="M714.6 374.8L717 372.6" stroke="#c8c8c8" stroke-width="0.5"/><rect x="704" y="109.1" width="22" height="0.4" fill="#494949"/><rect x="704" y="135.20000000000002" width="22" height="0.4" fill="#494949"/><rect x="704" y="179.8" width="22" height="0.4" fill="#494949"/><rect x="704" y="223.8" width="22" height="0.4" fill="#494949"/><rect x="704" y="284.8" width="22" height="0.4" fill="#494949"/></g><svg class="jt " role="img" aria-label="選択" x="711.8" y="85.75" width="6.6" height="3.5" fill="#cfcfcf" viewBox="0 -88 200 100" preserveAspectRatio="none"><title>選択</title><text x="0" y="0" font-size="100" font-weight="bold">選択</text></svg><svg class="jt " role="img" aria-label="シェイプ" x="708.8" y="111.75" width="12.6" height="3.5" fill="#cfcfcf" viewBox="0 -88 400 100" preserveAspectRatio="none"><title>シェイプ</title><text x="0" y="0" font-size="100" font-weight="bold">シェイプ</text></svg><svg class="jt " role="img" aria-label="描画" x="711.8" y="137.25" width="6.6" height="3.5" fill="#cfcfcf" viewBox="0 -88 200 100" preserveAspectRatio="none"><title>描画</title><text x="0" y="0" font-size="100" font-weight="bold">描画</text></svg><svg class="jt " role="img" aria-label="変形" x="711.8" y="182.65" width="6.6" height="3.5" fill="#cfcfcf" viewBox="0 -88 200 100" preserveAspectRatio="none"><title>変形</title><text x="0" y="0" font-size="100" font-weight="bold">変形</text></svg><svg class="jt " role="img" aria-label="文字" x="711.8" y="226.75" width="6.6" height="3.5" fill="#cfcfcf" viewBox="0 -88 200 100" preserveAspectRatio="none"><title>文字</title><text x="0" y="0" font-size="100" font-weight="bold">文字</text></svg><svg class="jt " role="img" aria-label="ナビゲーション" x="704.4" y="252.15" width="21.4" height="3.5" fill="#cfcfcf" viewBox="0 -88 700 100" preserveAspectRatio="none"><title>ナビゲーション</title><text x="0" y="0" font-size="100" font-weight="bold">ナビゲーション</text></svg><svg class="jt " role="img" aria-label="カラー" x="710.2" y="287.45" width="9.8" height="3.5" fill="#cfcfcf" viewBox="0 -88 300 100" preserveAspectRatio="none"><title>カラー</title><text x="0" y="0" font-size="100" font-weight="bold">カラー</text></svg></svg></aside>
<section class="propswrap"><svg class="layer" width="800" height="500" viewBox="0 0 800 500"><rect class="props" x="554.6" y="76" width="96.8" height="286.8" fill="#535353" style="filter:drop-shadow(0 0.5px 1.6px rgba(0,0,0,.6));"/><rect class="ptabs" x="554.6" y="76" width="96.8" height="10.8" fill="#454545"/><rect class="ptab active" x="554.6" y="76" width="27.6" height="10.9" fill="#535353"/><rect class="pgrip" x="554.6" y="360.3" width="96.8" height="2.5" fill="#4d4d4d"/><rect x="554.6" y="360.2" width="96.8" height="0.8" fill="#3e3e3e"/><rect class="sep" x="558" y="98.65" width="88.5" height="0.5" fill="#505050"/><rect class="sep" x="558" y="147.35" width="88.5" height="0.5" fill="#505050"/><rect class="sep" x="558" y="162.35" width="88.5" height="0.5" fill="#505050"/><rect class="sep" x="558" y="177.85" width="88.5" height="0.5" fill="#505050"/><rect class="sep" x="558" y="254.75" width="88.5" height="0.5" fill="#505050"/><g class="ic "><rect x="599.4" y="77.5" width="0.4" height="8" fill="#555"/><rect x="616.8" y="77.5" width="0.4" height="8" fill="#555"/><path d="M645 80L646.4 81.5L645 83M647 80L648.4 81.5L647 83" fill="none" stroke="#c0c0c0" stroke-width="0.55"/><rect x="601" y="361" width="6" height="0.8" fill="#3a3a3a"/><rect x="590" y="114" width="53.4" height="6.7" fill="#434343"/><path d="M638.8 117L640 118L641.2 117" fill="none" stroke="#d0d0d0" stroke-width="0.65"/><rect x="590" y="125" width="20.4" height="6.4" fill="#434343"/><rect x="611" y="125" width="6.2" height="6.4" fill="#434343"/><path d="M612.8 127.6H615.4L614.1 129.2Z" fill="#a8a8a8"/><path d="M625 127L623.4 128.2L625 129.4Z M631.2 127L632.8 128.2L631.2 129.4Z" fill="#7a7a7a"/><path d="M596.8 153H603.6V154.8H598.6V159.3H596.8Z" fill="#d8d8d8"/><path d="M598.6 154.8H603.6V156H599.8V159.3H598.6Z" fill="#8e8e8e"/><rect x="608.2" y="153.2" width="6.6" height="6.2" fill="none" stroke="#d8d8d8" stroke-width="0.45"/><path d="M610.4 153.2V159.4M612.6 153.2V159.4M608.2 155.2H614.8M608.2 157.3H614.8" fill="none" stroke="#d8d8d8" stroke-width="0.45"/><rect x="620.2" y="153.2" width="6.4" height="6.2" fill="#777" stroke="#d8d8d8" stroke-width="0.45"/><rect x="620.5" y="153.7" width="1.1" height="1.05" fill="#bdbdbd"/><rect x="620.5" y="155.8" width="1.1" height="1.05" fill="#bdbdbd"/><rect x="620.5" y="157.9" width="1.1" height="1.05" fill="#bdbdbd"/><rect x="621.6" y="154.75" width="1.1" height="1.05" fill="#bdbdbd"/><rect x="621.6" y="156.85" width="1.1" height="1.05" fill="#bdbdbd"/><rect x="622.7" y="153.7" width="1.1" height="1.05" fill="#bdbdbd"/><rect x="622.7" y="155.8" width="1.1" height="1.05" fill="#bdbdbd"/><rect x="622.7" y="157.9" width="1.1" height="1.05" fill="#bdbdbd"/><rect x="623.8" y="154.75" width="1.1" height="1.05" fill="#bdbdbd"/><rect x="623.8" y="156.85" width="1.1" height="1.05" fill="#bdbdbd"/><rect x="624.9" y="153.7" width="1.1" height="1.05" fill="#bdbdbd"/><rect x="624.9" y="155.8" width="1.1" height="1.05" fill="#bdbdbd"/><rect x="624.9" y="157.9" width="1.1" height="1.05" fill="#bdbdbd"/><rect x="592" y="166.5" width="8.2" height="8.3" fill="#2f2f2f"/><path d="M595 167.6V173.8" fill="none" stroke="#d8d8d8" stroke-width="0.9"/><path d="M593.4 169.2H599M593.4 172.2H599" fill="none" stroke="#d8d8d8" stroke-width="0.7"/><path d="M606.4 167.4V174M608.6 167.4V174" fill="none" stroke="#bdbdbd" stroke-width="0.45"/><path d="M604.8 169.4H611.4M604.8 171.6H611.4" fill="none" stroke="#bdbdbd" stroke-width="0.45"/><rect x="608.8" y="172" width="2.8" height="2.2" fill="#c8c8c8"/><rect x="615" y="166.5" width="8.3" height="8.3" fill="#2f2f2f"/><path d="M618 167.6V173.8" fill="none" stroke="#d8d8d8" stroke-width="0.9"/><path d="M618 169.2H621.6" fill="none" stroke="#d8d8d8" stroke-width="0.6"/><path d="M620.6 171.4L622 170.6V173.8H620.6Z" fill="#d8d8d8"/><rect x="606" y="181.2" width="8" height="7.6" fill="#2f2f2f"/><path d="M607.6 182.8V187" fill="none" stroke="#d8d8d8" stroke-width="0.6"/><path d="M608.6 183.8H610.6A1.5 1.5 0 0 1 610.6 186.8H609.8" fill="none" stroke="#d8d8d8" stroke-width="0.6"/><path d="M619.6 181.6V188.6" fill="none" stroke="#b4b4b4" stroke-width="1.4"/><path d="M621 184H623A1.3 1.3 0 0 1 623 186.6H622.4" fill="none" stroke="#d8d8d8" stroke-width="0.55"/><path d="M631.2 181.8V188.6" stroke="#c4c4c4" stroke-width="1.2" stroke-dasharray="1.2 0.6" fill="none"/><path d="M632.6 184H634.6A1.3 1.3 0 0 1 634.6 186.6H634" fill="none" stroke="#d8d8d8" stroke-width="0.55"/><rect x="583.6" y="216.6" width="21.4" height="7" fill="#434343"/><rect x="560.2" y="228.4" width="4.2" height="4.2" rx="0.5" fill="none" stroke="#c8c8c8" stroke-width="0.5"/><rect x="560" y="237.8" width="4.6" height="4.6" rx="0.6" fill="#d8d8d8"/><path d="M561 240.2L562 241.3L563.8 238.9" fill="none" stroke="#444" stroke-width="0.6"/><rect x="560" y="246.9" width="4.6" height="2.4" rx="0.6" fill="#d8d8d8"/></g><svg class="jt " role="img" aria-label="プロパティ" x="558.8" y="79.2" width="21" height="4.6" fill="#f0f0f0" viewBox="0 -88 500 100" preserveAspectRatio="none"><title>プロパティ</title><text x="0" y="0" font-size="100" font-weight="bold">プロパティ</text></svg><svg class="jt " role="img" aria-label="カラー" x="585.2" y="79.2" width="12.4" height="4.6" fill="#b4b4b4" viewBox="0 -88 300 100" preserveAspectRatio="none"><title>カラー</title><text x="0" y="0" font-size="100">カラー</text></svg><svg class="jt " role="img" aria-label="アピア" x="602.4" y="79.2" width="11.6" height="4.6" fill="#b4b4b4" viewBox="0 -88 300 100" preserveAspectRatio="none"><title>アピア</title><text x="0" y="0" font-size="100">アピア</text></svg><svg class="jt " role="img" aria-label="!" x="614.6" y="79.2" width="1.28" height="4.6" fill="#b4b4b4" viewBox="0 -88 27.78 100" preserveAspectRatio="none"><text x="0" y="0" font-size="100">!</text></svg><svg class="jt " role="img" aria-label="スウォ" x="620.2" y="79.2" width="12.2" height="4.6" fill="#b4b4b4" viewBox="0 -88 300 100" preserveAspectRatio="none"><title>スウォ</title><text x="0" y="0" font-size="100">スウォ</text></svg><svg class="jt " role="img" aria-label="ッ" x="632.6" y="79.2" width="4.2" height="4.6" fill="#b4b4b4" style="clip-path:inset(0 50% 0 0);" viewBox="0 -88 100 100" preserveAspectRatio="none"><title>ッ</title><text x="0" y="0" font-size="100">ッ</text></svg><svg class="jt " role="img" aria-label="選択なし" x="558.6" y="91.7" width="18.4" height="4.6" fill="#d6d6d6" viewBox="0 -88 400 100" preserveAspectRatio="none"><title>選択なし</title><text x="0" y="0" font-size="100">選択なし</text></svg><svg class="jt " role="img" aria-label="ドキュメント" x="558.8" y="104.5" width="27.2" height="4.6" fill="#d6d6d6" viewBox="0 -88 600 100" preserveAspectRatio="none"><title>ドキュメント</title><text x="0" y="0" font-size="100">ドキュメント</text></svg><svg class="jt " role="img" aria-label="単位" x="575" y="115" width="9.2" height="4.6" fill="#d6d6d6" viewBox="0 -88 200 100" preserveAspectRatio="none"><title>単位</title><text x="0" y="0" font-size="100">単位</text></svg><svg class="jt " role="img" aria-label=":" x="585.2" y="115" width="1.28" height="4.6" fill="#d6d6d6" viewBox="0 -88 27.78 100" preserveAspectRatio="none"><text x="0" y="0" font-size="100">:</text></svg><svg class="jt " role="img" aria-label="ミリメートル" x="592" y="115.1" width="27.4" height="4.6" fill="#e0e0e0" viewBox="0 -88 600 100" preserveAspectRatio="none"><title>ミリメートル</title><text x="0" y="0" font-size="100">ミリメートル</text></svg><svg class="jt " role="img" aria-label="アートボード" x="558" y="125.9" width="26" height="4.6" fill="#d6d6d6" viewBox="0 -88 600 100" preserveAspectRatio="none"><title>アートボード</title><text x="0" y="0" font-size="100">アートボード</text></svg><svg class="jt " role="img" aria-label=":" x="585.2" y="125.9" width="1.28" height="4.6" fill="#d6d6d6" viewBox="0 -88 27.78 100" preserveAspectRatio="none"><text x="0" y="0" font-size="100">:</text></svg><svg class="jt " role="img" aria-label="1" x="591.2" y="125.6" width="2.89" height="5.2" fill="#e4e4e4" viewBox="0 -88 55.62 100" preserveAspectRatio="none"><text x="0" y="0" font-size="100">1</text></svg><rect class="btn" x="589.1" y="136" width="51.9" height="6.7" rx="0.9" fill="none" stroke="#686868" stroke-width="0.5"/><svg class="jt " role="img" aria-label="アートボードを編集" x="594.5" y="137" width="41.4" height="4.6" fill="#e8e8e8" viewBox="0 -88 900 100" preserveAspectRatio="none"><title>アートボードを編集</title><text x="0" y="0" font-size="100" font-weight="bold">アートボードを編集</text></svg><svg class="jt " role="img" aria-label="定規とグリッド" x="558.6" y="153.5" width="32" height="4.6" fill="#d6d6d6" viewBox="0 -88 700 100" preserveAspectRatio="none"><title>定規とグリッド</title><text x="0" y="0" font-size="100">定規とグリッド</text></svg><svg class="jt " role="img" aria-label="ガイド" x="558.6" y="168.3" width="13.4" height="4.6" fill="#d6d6d6" viewBox="0 -88 300 100" preserveAspectRatio="none"><title>ガイド</title><text x="0" y="0" font-size="100">ガイド</text></svg><svg class="jt " role="img" aria-label="スナップオプション" x="558.6" y="183.2" width="41.4" height="4.6" fill="#d6d6d6" viewBox="0 -88 900 100" preserveAspectRatio="none"><title>スナップオプション</title><text x="0" y="0" font-size="100">スナップオプション</text></svg><rect class="btn" x="575" y="194" width="72" height="6.9" rx="0.9" fill="none" stroke="#686868" stroke-width="0.5"/><svg class="jt smart" role="img" aria-label="スマートガイドの環境設定..." x="581.9" y="195.1" width="59" height="4.6" fill="#e8e8e8" viewBox="0 -88 1290.02 100" preserveAspectRatio="none"><title>スマートガイドの環境設定...</title><text x="0" y="0" font-size="100" font-weight="bold">スマートガイドの環境設定</text><text x="1200" y="0" font-size="108" font-weight="bold">...</text></svg><svg class="jt " role="img" aria-label="環境設定" x="558.6" y="207.7" width="18.4" height="4.6" fill="#d6d6d6" viewBox="0 -88 400 100" preserveAspectRatio="none"><title>環境設定</title><text x="0" y="0" font-size="100">環境設定</text></svg><svg class="jt " role="img" aria-label="キー増加" x="560" y="217.9" width="18" height="4.6" fill="#d6d6d6" viewBox="0 -88 400 100" preserveAspectRatio="none"><title>キー増加</title><text x="0" y="0" font-size="100">キー増加</text></svg><svg class="jt " role="img" aria-label=":" x="578.8" y="217.9" width="1.28" height="4.6" fill="#d6d6d6" viewBox="0 -88 27.78 100" preserveAspectRatio="none"><text x="0" y="0" font-size="100">:</text></svg><svg class="jt " role="img" aria-label="3 mm" x="585.2" y="217.6" width="12.8" height="5.2" fill="#e4e4e4" viewBox="0 -88 250 100" preserveAspectRatio="none"><text x="0" y="0" font-size="100">3&#160;mm</text></svg><svg class="jt " role="img" aria-label="プレビュー境界を使用" x="565.6" y="228.2" width="46.4" height="4.6" fill="#d6d6d6" viewBox="0 -88 1000 100" preserveAspectRatio="none"><title>プレビュー境界を使用</title><text x="0" y="0" font-size="100">プレビュー境界を使用</text></svg><svg class="jt " role="img" aria-label="角を拡大・縮小" x="565.6" y="237.8" width="32.4" height="4.6" fill="#d6d6d6" viewBox="0 -88 700 100" preserveAspectRatio="none"><title>角を拡大・縮小</title><text x="0" y="0" font-size="100" font-weight="bold">角を拡大・縮小</text></svg><svg class="jt " role="img" aria-label="線幅と効果を拡大・縮小" x="565.6" y="246.94" width="50.4" height="2.53" fill="#d8d8d8" viewBox="0 -88 1100 100" preserveAspectRatio="none"><title>線幅と効果を拡大・縮小</title><text x="0" y="0" font-size="100" font-weight="bold">線幅と効果を拡大・縮小</text></svg><svg class="jt " role="img" aria-label="クイック操作" x="558.6" y="262.6" width="27.4" height="4.6" fill="#d6d6d6" viewBox="0 -88 600 100" preserveAspectRatio="none"><title>クイック操作</title><text x="0" y="0" font-size="100">クイック操作</text></svg><rect class="btn" x="558.5" y="271.7" width="87.1" height="7.1" rx="0.9" fill="none" stroke="#686868" stroke-width="0.5"/><svg class="jt " role="img" aria-label="ドキュメント設定" x="583.7" y="272.95" width="37" height="4.6" fill="#e8e8e8" viewBox="0 -88 800 100" preserveAspectRatio="none"><title>ドキュメント設定</title><text x="0" y="0" font-size="100" font-weight="bold">ドキュメント設定</text></svg><rect class="btn" x="558.5" y="283.6" width="87.1" height="7.4" rx="0.9" fill="none" stroke="#686868" stroke-width="0.5"/><svg class="jt " role="img" aria-label="環境設定" x="593" y="285" width="18.4" height="4.6" fill="#e8e8e8" viewBox="0 -88 400 100" preserveAspectRatio="none"><title>環境設定</title><text x="0" y="0" font-size="100" font-weight="bold">環境設定</text></svg><rect class="btn" x="558.5" y="295.5" width="87.1" height="7.7" rx="0.9" fill="none" stroke="#686868" stroke-width="0.5"/><svg class="jt " role="img" aria-label="ベクターを生成" x="586" y="297.05" width="32.4" height="4.6" fill="#e8e8e8" viewBox="0 -88 700 100" preserveAspectRatio="none"><title>ベクターを生成</title><text x="0" y="0" font-size="100" font-weight="bold">ベクターを生成</text></svg></svg></section>
</main>
</body>
</html>
